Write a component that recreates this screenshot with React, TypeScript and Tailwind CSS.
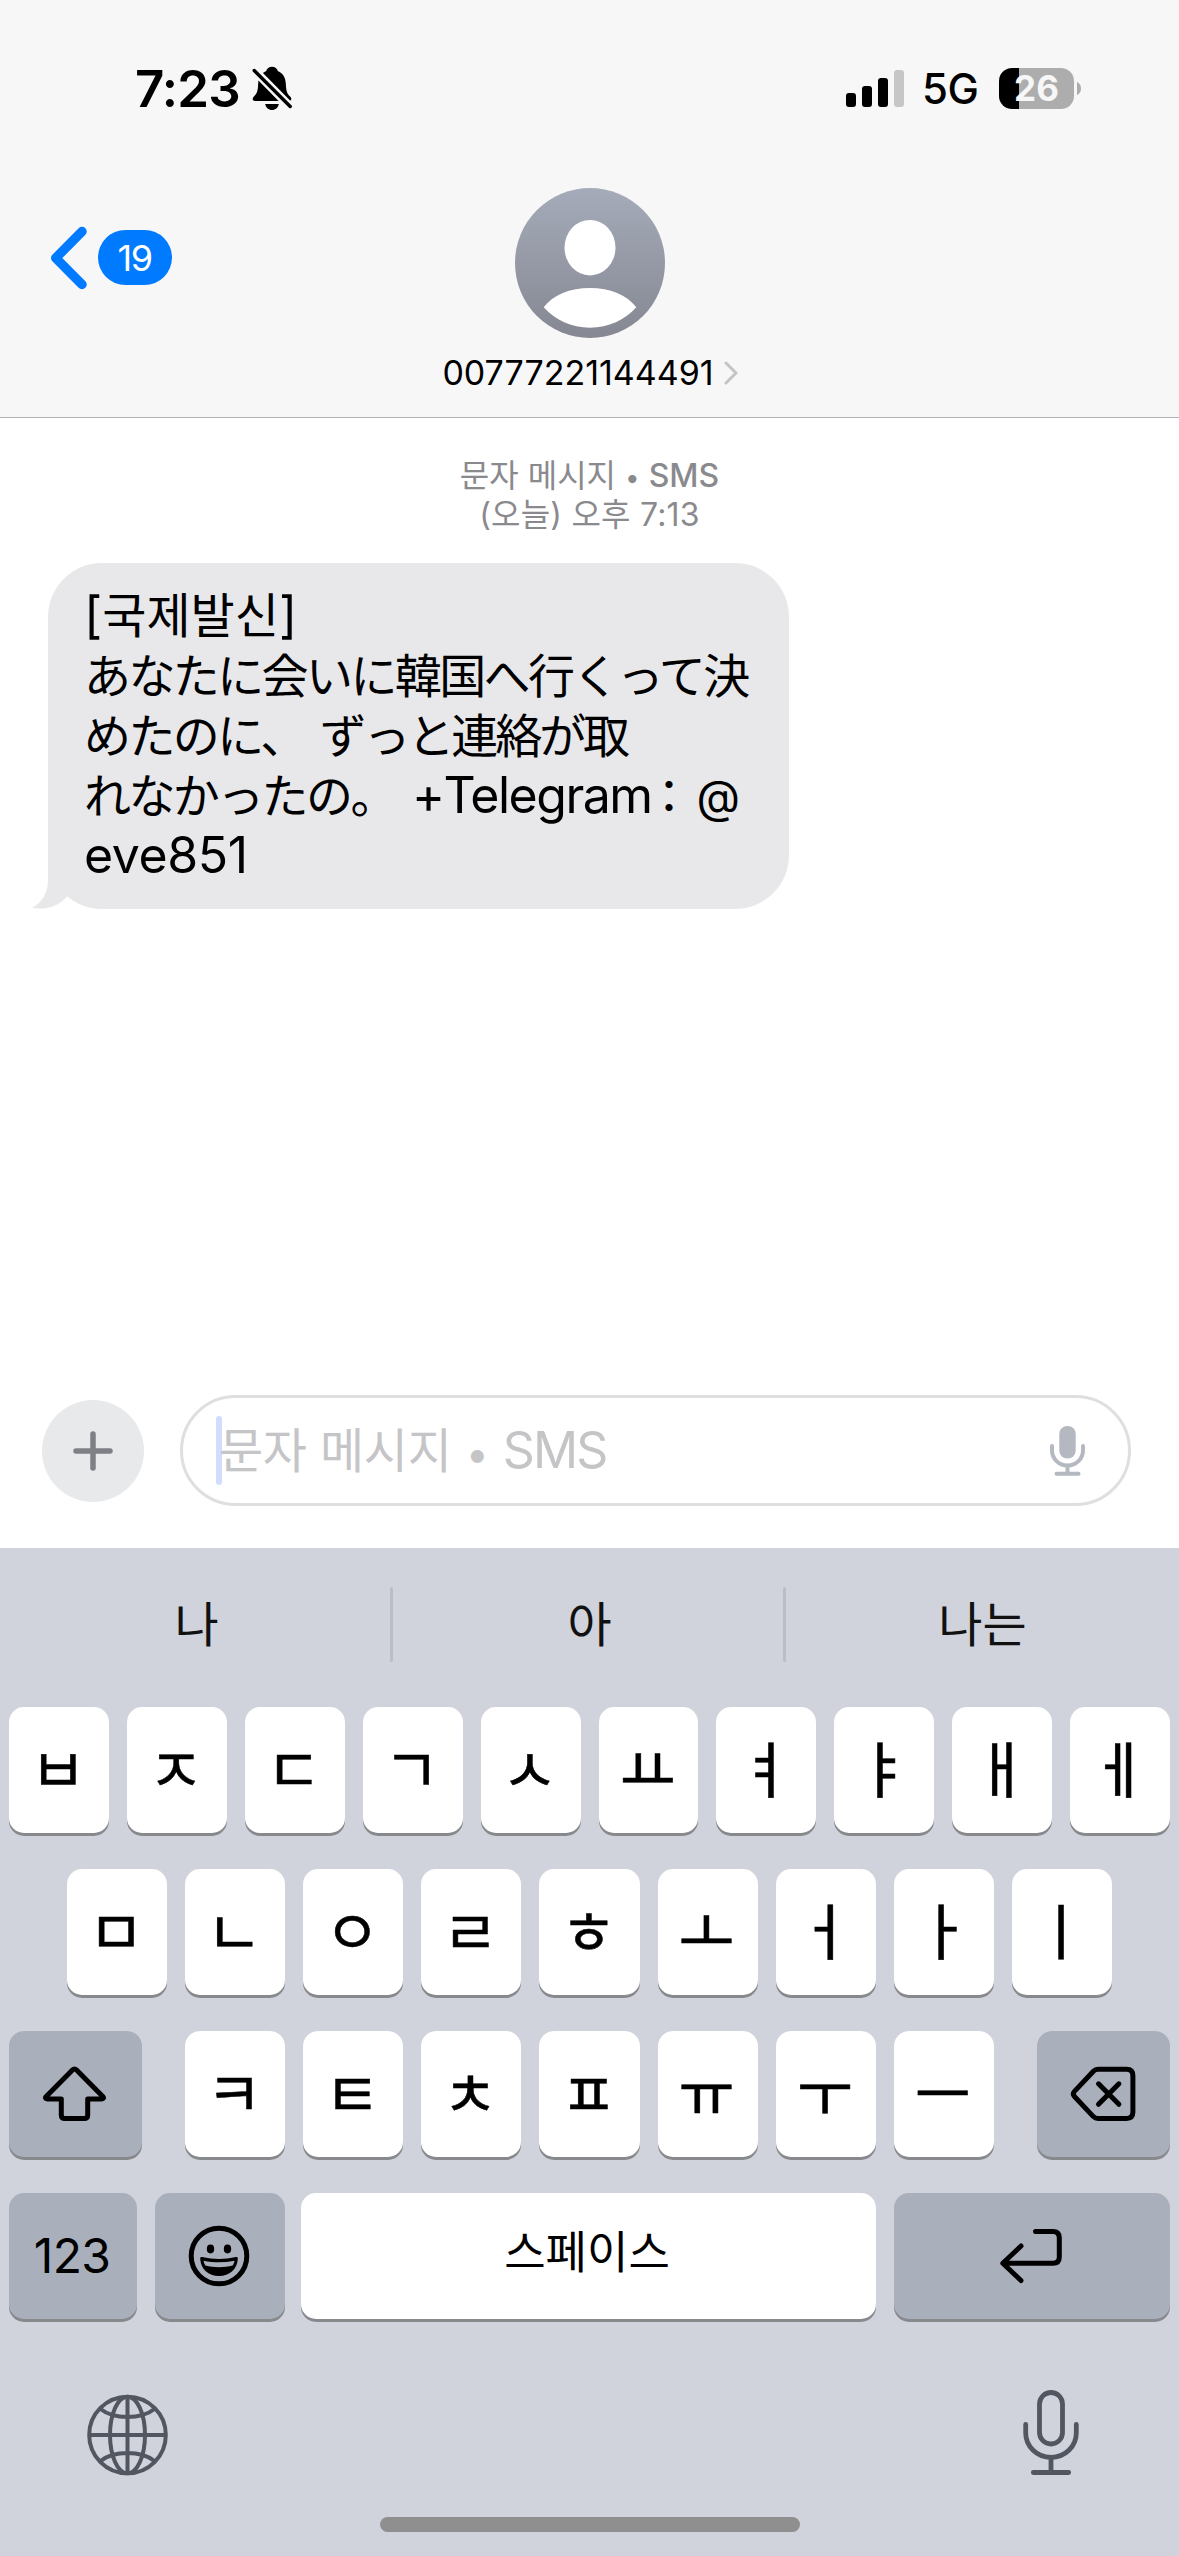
import type { ReactNode } from "react";

const ROW_1 = ["ㅂ", "ㅈ", "ㄷ", "ㄱ", "ㅅ", "ㅛ", "ㅕ", "ㅑ", "ㅐ", "ㅔ"];
const ROW_2 = ["ㅁ", "ㄴ", "ㅇ", "ㄹ", "ㅎ", "ㅗ", "ㅓ", "ㅏ", "ㅣ"];
const ROW_3 = ["ㅋ", "ㅌ", "ㅊ", "ㅍ", "ㅠ", "ㅜ", "ㅡ"];

const SUGGESTIONS = ["나", "아", "나는"];

function BellOffIcon() {
  return (
    <svg width="42" height="46" viewBox="252 65 42 46">
      <path
        d="M272 66.7c-3 0-5.2 1.7-5.8 4.2-5 2.200-7.700 6.500-8 12.600-.3 7.500-1.200 10.200-4.300 13-1.700 1.600-1.900 4.500 1.100 4.500h34c3 0 2.800-2.900 1.100-4.500-3.100-2.800-4-5.500-4.300-13-.3-6.100-3-10.400-8-12.600-.6-2.500-2.800-4.200-5.800-4.200z"
        fill="#000"
      />
      <path d="M265.200 104h13.600c-.6 3.800-3.400 6-6.800 6s-6.200-2.200-6.800-6z" fill="#000" />
      <path d="M253 69l38 38.500" stroke="#f7f7f7" strokeWidth="8.500" />
      <path d="M254.200 70.500l36 36" stroke="#000" strokeWidth="3.400" strokeLinecap="round" />
    </svg>
  );
}

function SignalBars() {
  return (
    <div className="flex h-[37px] items-end gap-[6px]">
      <span className="h-[14px] w-[10px] rounded-[3px] bg-black" />
      <span className="h-[21px] w-[10px] rounded-[3px] bg-black" />
      <span className="h-[29px] w-[10px] rounded-[3px] bg-black" />
      <span className="h-[37px] w-[10px] rounded-[3px] bg-[#c6c6c6]" />
    </div>
  );
}

function Battery() {
  return (
    <div className="flex items-center gap-[3px]">
      <div className="flex h-[41px] w-[75px] items-center justify-center rounded-[13px] bg-[linear-gradient(to_right,#000_20px,#adadad_20px)]">
        <span className="text-[35px] leading-none font-bold text-[#f7f7f7]">26</span>
      </div>
      <svg width="4" height="13" viewBox="0 0 4 13">
        <path d="M0 0c2.500 1 4 3.500 4 6.500S2.500 12 0 13z" fill="#adadad" />
      </svg>
    </div>
  );
}

function StatusBar() {
  return (
    <div className="flex h-[176px] items-center justify-between pr-[98px] pl-[135px]">
      <div className="flex items-center gap-[12px]">
        <span className="w-[105px] text-[51px] leading-none font-semibold tracking-[-0.8px] whitespace-nowrap">7:23</span>
        <BellOffIcon />
      </div>
      <div className="flex items-center">
        <SignalBars />
        <span className="ml-[18px] w-[77px] pt-[2px] text-[42px] leading-none font-medium tracking-[-0.5px] whitespace-nowrap">5G</span>
        <Battery />
      </div>
    </div>
  );
}

function Avatar() {
  return (
    <svg width="150" height="150" viewBox="0 0 150 150">
      <defs>
        <linearGradient id="avatar" x1="0" y1="0" x2="0" y2="1">
          <stop offset="0" stopColor="#a5abb9" />
          <stop offset="1" stopColor="#858892" />
        </linearGradient>
      </defs>
      <circle cx="75" cy="75" r="75" fill="url(#avatar)" />
      <ellipse cx="75" cy="59.700" rx="25.500" ry="27.700" fill="#fff" />
      <path d="M28.700 119.300C38 107 55 100 75 100s37 7 46.300 19.300C110 132 93.500 139.700 75 139.700s-35-7.700-46.300-20.400z" fill="#fff" />
    </svg>
  );
}

function ContactHeader() {
  return (
    <header className="h-[418px] shrink-0 border-b border-[#b2b2b4] bg-[#f7f7f7]">
      <StatusBar />
      <div className="grid grid-cols-[400px_1fr_400px] pt-[12px]">
        <div className="flex h-[139px] items-center pl-[50px]">
          <svg width="38" height="64" viewBox="0 0 38 64">
            <path d="M32 5.500L5.700 32 32 58.500" fill="none" stroke="#007aff" strokeWidth="9.500" strokeLinecap="round" strokeLinejoin="round" />
          </svg>
          <span className="ml-[10px] flex h-[55px] w-[74px] items-center justify-center rounded-full bg-[#007aff] pr-px text-[36px] leading-none tracking-[-1.500px] text-white">
            19
          </span>
        </div>
        <div className="flex flex-col items-center pl-px">
          <Avatar />
          <div className="mt-[15px] flex items-center gap-[10px]">
            <span className="text-[34px] leading-[40px] whitespace-nowrap">00777221144491</span>
            <svg width="14" height="24" viewBox="0 0 14 24">
              <path d="M2 2l10 10L2 22" fill="none" stroke="#c4c4c6" strokeWidth="3" strokeLinecap="round" strokeLinejoin="round" />
            </svg>
          </div>
        </div>
      </div>
    </header>
  );
}

/** One fixed-height line of the bubble; CJK runs are set slightly smaller than Latin */
function BubbleLine({ children }: { children: ReactNode }) {
  return <div className="h-[60px] text-[50px] leading-[60px] whitespace-pre">{children}</div>;
}

function Kana({ children, className = "tracking-[-2.600px]" }: { children: string; className?: string }) {
  return (
    <span lang="ja" className={`font-['Noto_Sans_CJK_JP',sans-serif] text-[47px] leading-none ${className}`}>
      {children}
    </span>
  );
}

function MessageBubble() {
  return (
    <div className="relative mt-[29px] ml-[48px] h-[346px] w-[741px] rounded-[54px] bg-[#e8e8ea] pt-[22px] pl-[36px]">
      <svg className="absolute bottom-0 left-[-17px]" width="60" height="56" viewBox="0 0 60 56">
        <path d="M17 0v27C17 40 11 50 1 54.800 14 57.500 28 53.500 36 43.500L54 24V0z" fill="#e8e8ea" />
      </svg>
      <div className="relative">
        <BubbleLine>
          [<span className="text-[48px] leading-none">국제발신</span>]
        </BubbleLine>
        <BubbleLine>
          <Kana>あなたに会いに韓国へ行くって決</Kana>
        </BubbleLine>
        <BubbleLine>
          <Kana>めたのに、</Kana> <Kana className="ml-px tracking-[-3.100px]">ずっと連絡が取</Kana>
        </BubbleLine>
        <BubbleLine>
          <Kana>れなかったの。</Kana> <span className="ml-[3px] tracking-[-1.500px]">+Telegram</span>
          <Kana className="mr-[4px] -ml-[6px]">：</Kana>
          <span className="text-[45px] leading-none">@</span>
        </BubbleLine>
        <BubbleLine>
          <span className="tracking-[-0.400px]">eve851</span>
        </BubbleLine>
      </div>
    </div>
  );
}

function Conversation() {
  return (
    <main className="h-[977px] shrink-0 bg-white pt-[38px]">
      <div className="flex flex-col items-center text-[32px] leading-[39px] text-[#8a8a8e]">
        <p className="h-[39px]">
          문자 메시지 <span className="text-[26px]">•</span> <span className="text-[32px] font-medium">SMS</span>
        </p>
        <p className="h-[39px] tracking-[0.200px]">(오늘) 오후 7:13</p>
      </div>
      <MessageBubble />
    </main>
  );
}

function Composer() {
  return (
    <div className="flex h-[153px] shrink-0 items-start bg-white pl-[42px]">
      <button className="mt-[5px] flex size-[102px] items-center justify-center rounded-full bg-[#e8e9eb]">
        <svg width="40" height="40" viewBox="0 0 40 40">
          <path d="M20 3v34M3 20h34" stroke="#7f7f86" strokeWidth="5.500" strokeLinecap="round" />
        </svg>
      </button>
      <div className="ml-[36px] flex h-[111px] w-[951px] items-center rounded-full border-[3px] border-[#dfdfdf] pr-[43px] pl-[33px]">
        <span className="h-[69px] w-[6px] rounded-full bg-[#d1dcff]" />
        <span className="-ml-[3px] flex-1 text-[48px] leading-[60px] tracking-[-0.300px] text-[#c5c5c7]">
          문자 메시지 <span className="mx-px text-[41px] leading-none">•</span>{" "}
          <span className="text-[50px] leading-none tracking-[-1.800px]">SMS</span>
        </span>
        <svg width="35" height="50" viewBox="0 0 35 50">
          <rect x="9.300" y="0" width="16.400" height="32.500" rx="8" fill="#b3b8c1" />
          <path d="M2 20v4.500a15.500 15 0 0 0 31 0V20M17.500 39.500V47M6.500 47.700h22" fill="none" stroke="#b3b8c1" strokeWidth="4" strokeLinecap="round" />
        </svg>
      </div>
    </div>
  );
}

function LetterKey({ label }: { label: string }) {
  return (
    <button className="flex h-[126px] flex-1 items-center justify-center rounded-[15px] bg-white pt-[2px] pr-[2px] text-[61px] leading-none shadow-[0_3px_0_#87898d] [-webkit-text-stroke:0.500px_#000]">
      {label}
    </button>
  );
}

function GrayKey({ className, children }: { className: string; children: ReactNode }) {
  return (
    <button className={`flex h-[126px] items-center justify-center rounded-[15px] bg-[#a9afbb] pr-[2px] shadow-[0_3px_0_#87898d] ${className}`}>
      {children}
    </button>
  );
}

function ShiftIcon() {
  return (
    <svg width="64" height="56" viewBox="43 66 64 56" fill="none" stroke="#000" strokeWidth="5" strokeLinejoin="round">
      <path d="M72.700 69.800L46.200 96.500c-1.300 1.400-.6 2.500 1 2.500H61.300v16c0 2.200 1.300 3.500 3.500 3.500h19.400c2.200 0 3.500-1.300 3.500-3.500V99h14.100c1.600 0 2.300-1.100 1-2.500L76.300 69.800c-1.200-1.200-2.400-1.200-3.600 0z" />
    </svg>
  );
}

function BackspaceIcon() {
  return (
    <svg width="66" height="56" viewBox="1070 66 66 56" fill="none" stroke="#000" strokeWidth="5" strokeLinecap="round" strokeLinejoin="round">
      <path d="M1098 69.300h28.500c4.200 0 6.400 2.200 6.400 6.400v36.400c0 4.200-2.200 6.400-6.400 6.400H1098c-1.800 0-3.300-.6-4.600-1.900l-18.700-19.800c-1.900-2-1.900-3.700 0-5.700l18.700-19.900c1.300-1.300 2.800-1.900 4.600-1.900z" />
      <path d="M1098.500 83.800l20.400 20.500M1118.900 83.800l-20.400 20.500" />
    </svg>
  );
}

function ReturnIcon() {
  return (
    <svg width="64" height="56" viewBox="1000 229 64 56" fill="none" stroke="#000" strokeWidth="5" strokeLinecap="round" strokeLinejoin="round">
      <path d="M1036.500 232.500H1054c4.200 0 6.300 2.100 6.300 6.300v19.100c0 4.200-2.100 6.300-6.300 6.300h-50M1022 247l-18.200 17.200L1022 281.500" />
    </svg>
  );
}

function SmileyIcon() {
  return (
    <svg width="62" height="62" viewBox="0 0 62 62">
      <circle cx="31" cy="31" r="27.800" fill="none" stroke="#000" strokeWidth="5" />
      <ellipse cx="22.500" cy="24" rx="3.700" ry="4.400" />
      <ellipse cx="39.500" cy="24" rx="3.700" ry="4.400" />
      <path d="M12.200 33.500c0-1.200.7-1.700 2-1.400 11 2.600 22.600 2.600 33.600 0 1.300-.3 2 .2 2 1.400C49.500 44 41.500 51 31 51S12.500 44 12.200 33.500z" />
      <path d="M15.500 35.800c10.500 2 20.500 2 31 0-.3 1.800-.9 3.200-1.900 4.800-8.700 2.100-18.500 2.100-27.200 0-1-1.600-1.600-3-1.900-4.800z" fill="#a9afbb" />
    </svg>
  );
}

function GlobeIcon() {
  return (
    <svg width="82" height="82" viewBox="0 0 82 82" fill="none" stroke="#525660" strokeWidth="4">
      <circle cx="40.500" cy="41" r="38.300" />
      <ellipse cx="40.500" cy="41" rx="17.500" ry="38.300" />
      <path d="M40.500 3v76M2.500 41h76M13.500 15c7 5.500 16.500 8 27 8s20-2.500 27-8M13.500 67c7-5.500 16.500-8 27-8s20 2.500 27 8" />
    </svg>
  );
}

function DictationIcon() {
  return (
    <svg width="56" height="86" viewBox="0 0 56 86" fill="none" stroke="#525660" strokeWidth="4.800" strokeLinecap="round">
      <rect x="16.500" y="2.500" width="23" height="51.500" rx="11.500" />
      <path d="M2.700 34.500v8.500a25.300 24.500 0 0 0 50.600 0v-8.500M28 68v14M10.300 82.500h35.400" />
    </svg>
  );
}

function Keyboard() {
  return (
    <section className="flex h-[1008px] shrink-0 flex-col bg-[#d0d3db]">
      <div className="grid h-[159px] grid-cols-3 pt-[39px]">
        {SUGGESTIONS.map((word, i) => (
          <div key={word} className="relative flex h-[75px] items-center justify-center text-[48px] leading-none text-[#111]">
            {word}
            {i < 2 && <span className="absolute top-0 right-0 h-[75px] w-[3px] rounded-full bg-[#bbbec3]" />}
          </div>
        ))}
      </div>

      <div className="flex flex-col gap-[36px] px-[9px]">
        <div className="flex gap-[18px]">
          {ROW_1.map((k) => (
            <LetterKey key={k} label={k} />
          ))}
        </div>
        <div className="flex gap-[18px] px-[58px]">
          {ROW_2.map((k) => (
            <LetterKey key={k} label={k} />
          ))}
        </div>
        <div className="flex gap-[43px]">
          <GrayKey className="w-[133px]">
            <ShiftIcon />
          </GrayKey>
          <div className="flex flex-1 gap-[18px]">
            {ROW_3.map((k) => (
              <LetterKey key={k} label={k} />
            ))}
          </div>
          <GrayKey className="w-[133px]">
            <BackspaceIcon />
          </GrayKey>
        </div>
        <div className="flex">
          <GrayKey className="w-[128px] text-[48px] leading-none tracking-[-0.700px]">123</GrayKey>
          <GrayKey className="ml-[18px] w-[130px]">
            <SmileyIcon />
          </GrayKey>
          <button className="ml-[16px] flex h-[126px] w-[575px] items-center justify-center rounded-[15px] bg-white pr-[3px] pb-[8px] text-[45px] leading-none shadow-[0_3px_0_#87898d]">
            스페이스
          </button>
          <GrayKey className="ml-[18px] w-[276px]">
            <ReturnIcon />
          </GrayKey>
        </div>
      </div>

      <div className="flex items-start justify-between pt-[71px] pr-[100px] pl-[87px]">
        <div className="pt-[4px]">
          <GlobeIcon />
        </div>
        <DictationIcon />
      </div>

      {/* Home indicator */}
      <div className="mt-auto mb-[24px] h-[15px] w-[420px] self-center rounded-full bg-[#8f8f90]" />
    </section>
  );
}

export default function App() {
  return (
    <div lang="ko" className="flex h-[2556px] w-[1179px] flex-col overflow-hidden bg-white font-[Inter,'Noto_Sans_CJK_KR',sans-serif] text-black">
      <ContactHeader />
      <Conversation />
      <Composer />
      <Keyboard />
    </div>
  );
}
